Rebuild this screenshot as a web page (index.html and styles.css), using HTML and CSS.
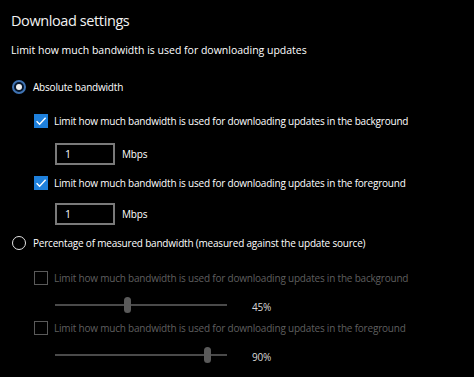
FILE: index.html
```html
<!DOCTYPE html>
<html>
<head>
<meta charset="utf-8">
<link rel="stylesheet" href="styles.css">
</head>
<body>
<div class="page">
  <div class="title">Download settings</div>
  <div class="row sub">Limit how much bandwidth is used for downloading updates</div>

  <div class="row r1 radio-row">
    <span class="radio on"><span class="dot"></span></span>
    <span class="label">Absolute bandwidth</span>
  </div>

  <div class="row cb1 indent1">
    <span class="check on"><svg viewBox="0 0 14 14" width="14" height="14"><path d="M2.6 7.2 L5.6 10.2 L11.6 3.8" fill="none" stroke="#fff" stroke-width="1.4"/></svg></span>
    <span class="label">Limit how much bandwidth is used for downloading updates in the background</span>
  </div>
  <div class="row in1 indent2">
    <span class="box">1</span><span class="unit">Mbps</span>
  </div>

  <div class="row cb2 indent1">
    <span class="check on"><svg viewBox="0 0 14 14" width="14" height="14"><path d="M2.6 7.2 L5.6 10.2 L11.6 3.8" fill="none" stroke="#fff" stroke-width="1.4"/></svg></span>
    <span class="label">Limit how much bandwidth is used for downloading updates in the foreground</span>
  </div>
  <div class="row in2 indent2">
    <span class="box">1</span><span class="unit">Mbps</span>
  </div>

  <div class="row r2 radio-row">
    <span class="radio"></span>
    <span class="label">Percentage of measured bandwidth (measured against the update source)</span>
  </div>

  <div class="row cb3 indent1 disabled">
    <span class="check"></span>
    <span class="label">Limit how much bandwidth is used for downloading updates in the background</span>
  </div>
  <div class="row sl1 indent2 slider-row">
    <span class="slider"><span class="track"></span><span class="thumb" style="left:69px"></span></span>
    <span class="pct">45%</span>
  </div>

  <div class="row cb4 indent1 disabled">
    <span class="check"></span>
    <span class="label">Limit how much bandwidth is used for downloading updates in the foreground</span>
  </div>
  <div class="row sl2 indent2 slider-row">
    <span class="slider"><span class="track"></span><span class="thumb" style="left:149px"></span></span>
    <span class="pct">90%</span>
  </div>
</div>
</body>
</html>
```

FILE: styles.css
```css
html, body {
  margin: 0;
  padding: 0;
  background: #000;
}
body {
  width: 474px;
  height: 377px;
  overflow: hidden;
  font-family: "Open Sans", "Noto Sans", sans-serif;
  color: #fff;
}
.page {
  padding: 0 0 0 11px;
}
.title {
  margin-top: 6px;
  height: 30px;
  line-height: 30px;
  font-size: 14.5px;
  letter-spacing: -0.4px;
  color: #f2f2f2;
}
.row {
  display: flex;
  align-items: center;
  height: 22px;
  font-size: 10px;
  letter-spacing: -0.2px;
  white-space: nowrap;
}
.sub { margin-top: 4px; height: 20px; font-size: 10.5px; letter-spacing: 0; }
.r1 { margin-top: 16px; }
.cb1 { margin-top: 12px; }
.in1 { margin-top: 11px; }
.cb2 { margin-top: 7px; }
.in2 { margin-top: 9px; }
.r2 { margin-top: 7px; }
.cb3 { margin-top: 13px; }
.sl1 { margin-top: 8px; height: 16px; }
.cb4 { margin-top: 4px; }
.sl2 { margin-top: 8px; height: 16px; }

.radio-row { padding-left: 1px; }
.indent1 { padding-left: 23px; }
.indent2 { padding-left: 44px; }

.radio {
  box-sizing: border-box;
  width: 14px;
  height: 14px;
  border-radius: 50%;
  border: 1.5px solid #e6e6e6;
  display: flex;
  align-items: center;
  justify-content: center;
  margin-right: 7px;
  flex: none;
}
.radio.on {
  border: 2px solid #3f73b3;
  background: #06162b;
}
.radio .dot {
  width: 6px;
  height: 6px;
  border-radius: 50%;
  background: #f0f0f0;
}
.check {
  box-sizing: border-box;
  width: 14px;
  height: 14px;
  border: 1.5px solid #5a5a5a;
  margin-right: 6px;
  flex: none;
  display: flex;
}
.check.on {
  border: none;
  background: #1e80dc;
}
.disabled .label { color: #5f5f5f; }

.box {
  box-sizing: border-box;
  width: 60px;
  height: 22px;
  border: 2px solid #7a7a7a;
  padding-left: 8px;
  line-height: 18px;
  font-size: 10.5px;
}
.unit { margin-left: 7px; }

.slider {
  position: relative;
  width: 172px;
  height: 16px;
  flex: none;
}
.track {
  position: absolute;
  left: 0;
  right: 0;
  top: 7px;
  height: 2px;
  background: #4a4a4a;
}
.thumb {
  position: absolute;
  top: 0;
  width: 7px;
  height: 16px;
  border-radius: 4px;
  background: #5a5a5a;
}
.pct {
  margin-left: 25px;
  padding-top: 3px;
  color: #d8d8d8;
}
```
